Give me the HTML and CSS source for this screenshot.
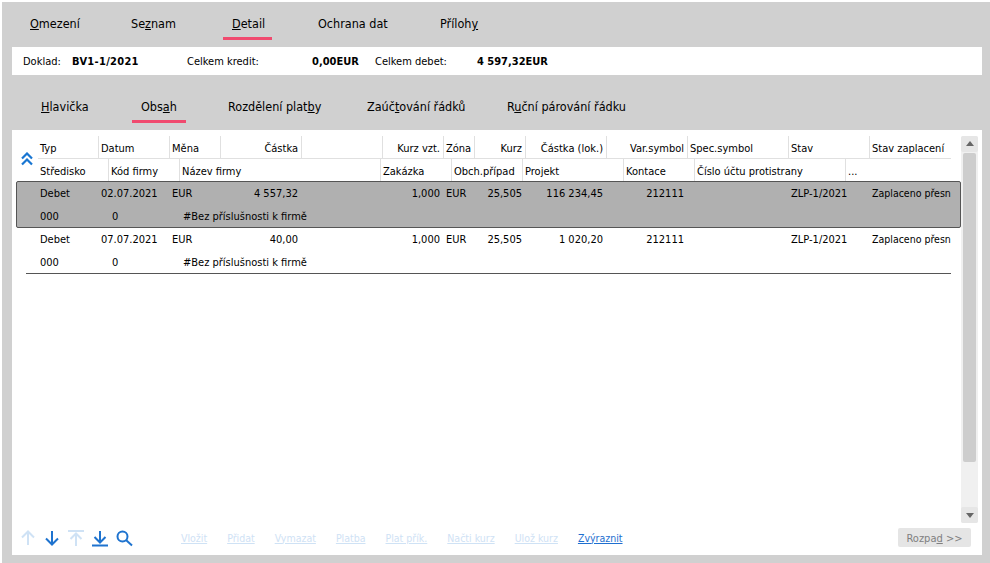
FILE: index.html
```html
<!DOCTYPE html>
<html lang="cs">
<head>
    <meta charset="UTF-8">
    <title>Detail</title>
    <link rel="stylesheet" href="styles.css">
</head>
<body>
    <div class="window">
        <nav class="tabs main-tabs">
            <a><u>O</u>mezení</a>
            <a>Se<u>z</u>nam</a>
            <a class="active"><u>D</u>etail</a>
            <a>Ochrana dat</a>
            <a>Příloh<u>y</u></a>
        </nav>

        <div class="info-bar">
            <span>Doklad:</span>
            <b class="doc-no">BV1-1/2021</b>
            <span>Celkem kredit:</span>
            <b>0,00EUR</b>
            <span>Celkem debet:</span>
            <b>4 597,32EUR</b>
        </div>

        <nav class="tabs sub-tabs">
            <a><u>H</u>lavička</a>
            <a class="active">Obs<u>a</u>h</a>
            <a>Rozdělení plat<u>b</u>y</a>
            <a>Zaúč<u>t</u>ování řádků</a>
            <a>R<u>u</u>ční párování řádku</a>
        </nav>

        <section class="content">
            <div class="content-top">
                <div class="table">
                    <div class="table-head">
                        <div class="collapse">
                            <svg width="12" height="14" viewBox="0 0 12 14" fill="none" stroke="#1976d2" stroke-width="2.2">
                                <path d="M1 6.5 L6 1.5 L11 6.5"/>
                                <path d="M1 12.5 L6 7.5 L11 12.5"/>
                            </svg>
                        </div>
                        <div class="head-rows">
                            <div class="row-a head-a">
                                <span>Typ</span><span>Datum</span><span>Měna</span><span class="num">Částka</span><span></span>
                                <span class="num">Kurz vzt.</span><span>Zóna</span><span class="num">Kurz</span><span class="num">Částka (lok.)</span>
                                <span class="num">Var.symbol</span><span>Spec.symbol</span><span>Stav</span><span>Stav zaplacení</span>
                            </div>
                            <div class="row-b head-b">
                                <span>Středisko</span><span>Kód firmy</span><span>Název firmy</span><span>Zakázka</span><span>Obch.případ</span>
                                <span>Projekt</span><span>Kontace</span><span>Číslo účtu protistrany</span><span>...</span>
                            </div>
                        </div>
                    </div>

                    <div class="record selected">
                        <div class="row-a line-a">
                            <span>Debet</span><span>02.07.2021</span><span>EUR</span><span class="num">4 557,32</span><span></span>
                            <span class="num">1,000</span><span>EUR</span><span class="num">25,505</span><span class="num">116 234,45</span>
                            <span class="num">212111</span><span></span><span>ZLP-1/2021</span><span class="state">Zaplaceno přesn</span>
                        </div>
                        <div class="row-b line-b">
                            <span>000</span><span>0</span><span>#Bez příslušnosti k firmě</span>
                        </div>
                    </div>
                    <div class="record">
                        <div class="row-a line-a">
                            <span>Debet</span><span>07.07.2021</span><span>EUR</span><span class="num">40,00</span><span></span>
                            <span class="num">1,000</span><span>EUR</span><span class="num">25,505</span><span class="num">1 020,20</span>
                            <span class="num">212111</span><span></span><span>ZLP-1/2021</span><span class="state">Zaplaceno přesn</span>
                        </div>
                        <div class="row-b line-b">
                            <span>000</span><span>0</span><span>#Bez příslušnosti k firmě</span>
                        </div>
                    </div>
                    <div class="table-end"></div>
                </div>

                <div class="scrollbar">
                    <div class="scroll-btn"><i class="tri-up"></i></div>
                    <div class="scroll-thumb"></div>
                    <div class="scroll-btn"><i class="tri-down"></i></div>
                </div>
            </div>

            <div class="toolbar">
                <div class="tool-icons">
                    <svg class="off" width="18" height="18" viewBox="0 0 18 18"><path d="M9 16 V3 M3 8.5 L9 2.5 L15 8.5"/></svg>
                    <svg width="18" height="18" viewBox="0 0 18 18"><path d="M9 2 V15 M3 9.5 L9 15.5 L15 9.5"/></svg>
                    <svg class="off" width="18" height="18" viewBox="0 0 18 18"><path d="M1 2 H17 M9 17 V5 M3.5 10 L9 4.5 L14.5 10"/></svg>
                    <svg width="18" height="18" viewBox="0 0 18 18"><path d="M9 2 V13 M3.5 8 L9 13.5 L14.5 8 M1 16.5 H17"/></svg>
                    <svg width="18" height="18" viewBox="0 0 18 18"><circle cx="7.5" cy="7.5" r="5"/><path d="M11 11 L17 16.5"/></svg>
                </div>
                <div class="tool-links">
                    <a class="off">Vložit</a>
                    <a class="off">Přidat</a>
                    <a class="off">Vymazat</a>
                    <a class="off">Platba</a>
                    <a class="off">Plat přík.</a>
                    <a class="off">Načti kurz</a>
                    <a class="off">Ulož kurz</a>
                    <a>Zvýraznit</a>
                </div>
                <button class="split-btn" disabled>Rozpa<u>d</u> &gt;&gt;</button>
            </div>
        </section>
    </div>
</body>
</html>
```

FILE: styles.css
```css
* {box-sizing: border-box;}
html, body {margin: 0; padding: 0; background: #fff;}
body {font-family: "DejaVu Sans Condensed", "DejaVu Sans", sans-serif; font-size: 11px; color: #000;}

.window {margin: 2px 0 0 2px; height: 561px; background: #d0d0d0; padding: 0 8px 0 10px; overflow: hidden;}

/* tabs */
.tabs {display: grid; align-items: start; font-size: 12.5px;}
.tabs a {justify-self: start; line-height: 16px;}
.tabs a.active {margin-left: -9px; padding: 0 9px 5px; border-bottom: 3px solid #f04a6e;}
.main-tabs {height: 45px; padding: 14px 0 0 18px; grid-template-columns: 101px 101px 86px 122px auto;}
.main-tabs a.active {padding-right: 7px;}
.sub-tabs {height: 55px; padding: 24px 0 0 29px; grid-template-columns: 100px 87px 139px 140px auto;}

/* info bar */
.info-bar {height: 28px; background: #fff; display: grid; align-items: center; padding-left: 11px; grid-template-columns: 49px 115px 125px 63px 102px auto;}
.doc-no {letter-spacing: .3px;}

/* content */
.content {height: 425px; background: #fff; display: flex; flex-direction: column;}
.content-top {display: flex; height: 393px;}
.table {width: 949px; padding-top: 6px;}
.table-head {display: flex; align-items: stretch;}
.collapse {width: 26px; padding-left: 9px; display: flex; align-items: center;}
.collapse svg {display: block;}
.head-rows {flex: 1; width: 913px; margin-right: 10px;}

.row-a, .row-b {display: grid;}
.row-a {grid-template-columns: 61px 71px 51px 81px 81px 61px 31px 51px 81px 81px 101px 81px 81px;}
.row-b {grid-template-columns: 71px 71px 201px 71px 71px 101px 71px 151px 105px;}
.row-a span, .row-b span {padding: 0 3px 0 2px; white-space: nowrap; overflow: hidden;}
.row-a .num {text-align: right;}
.row-a .state {overflow: visible; font-size: 10.5px;}

.head-a {height: 23px; border-bottom: 1px solid #e0e0e0;}
.head-a span, .head-b span {border-right: 1px solid #e0e0e0; line-height: 26px;}
.head-a span:last-child, .head-b span:last-child {border-right: 0;}
.head-b {height: 22px;}

.record {height: 46px; margin-left: 4px; width: 945px; padding: 0 9px 0 21px; border: 1px solid transparent; border-bottom: 0;}
.record.selected {height: 47px; margin-bottom: -1px; background: #b0b0b0; border: 1px solid #555; border-radius: 2px;}
.line-a {height: 23px; line-height: 23px;}
.line-a .num {padding-right: 4px;}
.line-b {height: 22px; line-height: 24px;}
.line-b span:nth-child(2) {padding-left: 3px;}
.line-b span:nth-child(3) {padding-left: 3px;}

.table-end {height: 1px; margin: 0 10px 0 14px; background: #555;}

/* scrollbar */
.scrollbar {width: 17px; margin-top: 6px; background: #f0f0f0; display: flex; flex-direction: column; border-radius: 2px;}
.scroll-btn {height: 16px; background: #e6e6e6; border-radius: 2px; display: flex; align-items: center; justify-content: center;}
.tri-up {border: 4px solid transparent; border-top: 0; border-bottom: 5px solid #666;}
.tri-down {border: 4px solid transparent; border-bottom: 0; border-top: 5px solid #666;}
.scroll-thumb {height: 310px; margin: 1px 2px 0; background: #cdcdcd; border-radius: 2px; margin-bottom: 45px;}

/* toolbar */
.toolbar {flex: 1; display: flex; align-items: center; padding: 0 11px 3px 7px;}
.tool-icons {display: flex; gap: 6px;}
.tool-icons svg {fill: none; stroke: #1e73cf; stroke-width: 2;}
.tool-icons svg.off {stroke: #cfe2f5;}
.tool-links {display: flex; gap: 20px; margin-left: 48px; font-size: 10.5px;}
.tool-links a {color: #1e6fd0; text-decoration: underline;}
.tool-links a.off {color: #cfe2f5;}
.split-btn {margin-left: auto; width: 73px; height: 19px; padding: 1px 0 0; border: 0; border-radius: 2px; background: #e5e5e5; color: #808080; font: inherit;}
```
